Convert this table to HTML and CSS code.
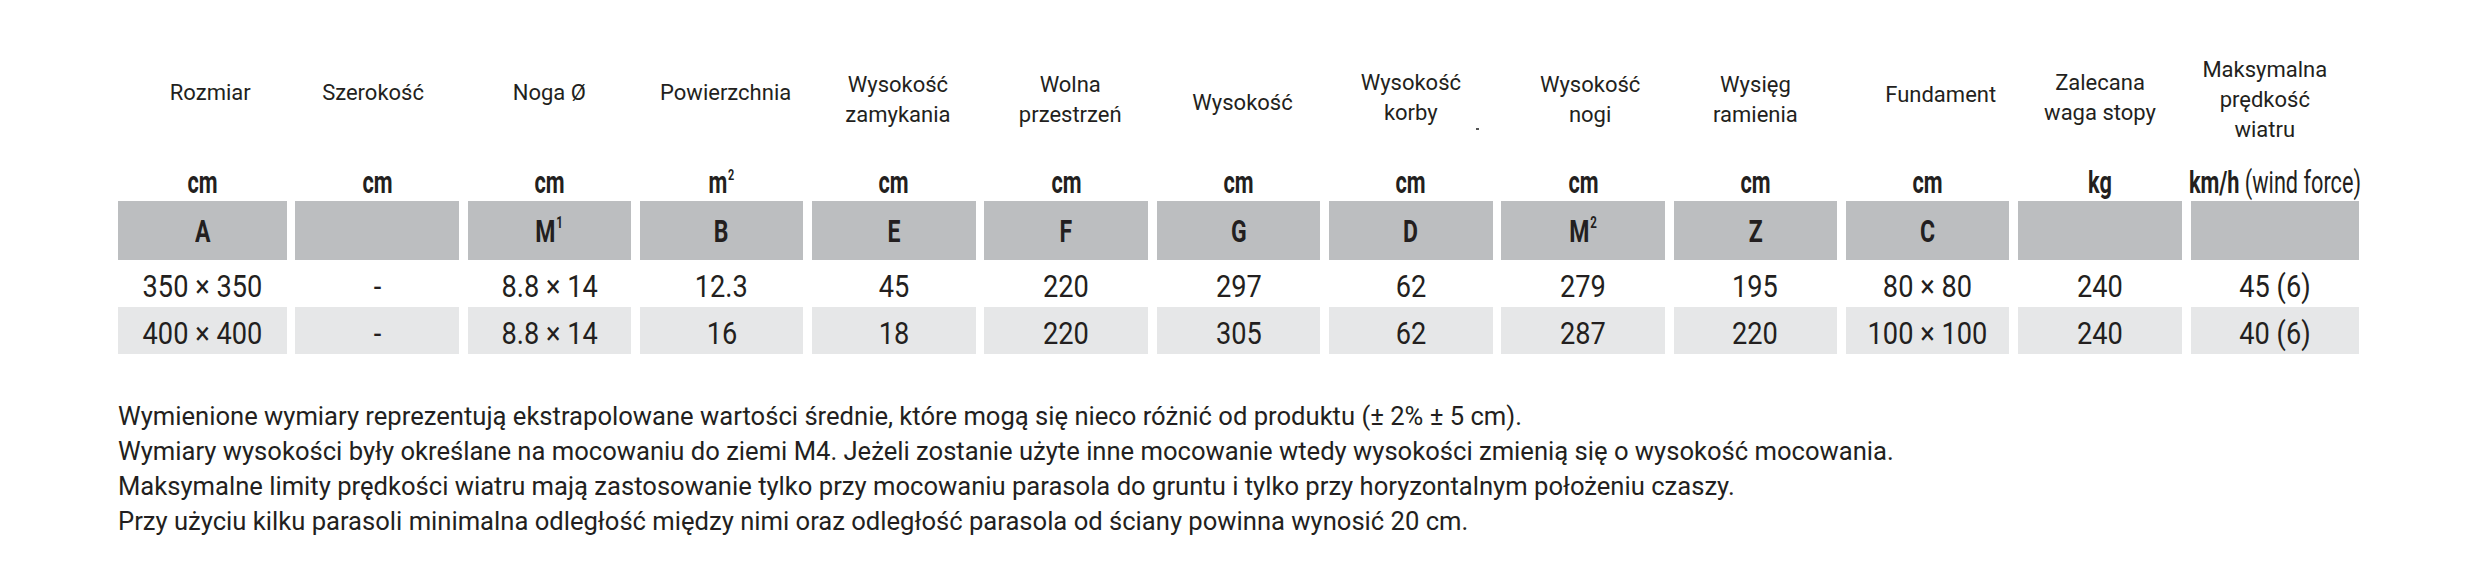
FILE: index.html
```html
<!DOCTYPE html>
<html lang="pl">
<head>
<meta charset="utf-8">
<title>Wymiary parasola</title>
<link rel="stylesheet" href="styles.css">
</head>
<body>
<div class="page">
  <div class="spec">
    <div class="lab hi r8">Rozmiar</div>
    <div class="lab hi l4">Szerokość</div>
    <div class="lab hi">Noga Ø</div>
    <div class="lab hi r4">Powierzchnia</div>
    <div class="lab r4">Wysokość<br>zamykania</div>
    <div class="lab r4">Wolna<br>przestrzeń</div>
    <div class="lab lo r4">Wysokość</div>
    <div class="lab up">Wysokość<br>korby<span class="speck"></span></div>
    <div class="lab r7">Wysokość<br>nogi</div>
    <div class="lab">Wysięg<br>ramienia</div>
    <div class="lab mid r13">Fundament</div>
    <div class="lab up">Zalecana<br>waga stopy</div>
    <div class="lab l10">Maksymalna<br>prędkość<br>wiatru</div>

    <div class="unit"><span class="t">cm</span></div>
    <div class="unit"><span class="t">cm</span></div>
    <div class="unit"><span class="t">cm</span></div>
    <div class="unit"><span class="t">m<sup>2</sup></span></div>
    <div class="unit"><span class="t">cm</span></div>
    <div class="unit"><span class="t">cm</span></div>
    <div class="unit"><span class="t">cm</span></div>
    <div class="unit"><span class="t">cm</span></div>
    <div class="unit"><span class="t">cm</span></div>
    <div class="unit"><span class="t">cm</span></div>
    <div class="unit"><span class="t">cm</span></div>
    <div class="unit"><span class="t">kg</span></div>
    <div class="unit"><span class="t">km/h <span class="thin">(wind force)</span></span></div>

    <div class="key"><span class="t">A</span></div>
    <div class="key"></div>
    <div class="key"><span class="t">M<sup>1</sup></span></div>
    <div class="key"><span class="t">B</span></div>
    <div class="key"><span class="t">E</span></div>
    <div class="key"><span class="t">F</span></div>
    <div class="key"><span class="t">G</span></div>
    <div class="key"><span class="t">D</span></div>
    <div class="key"><span class="t">M<sup>2</sup></span></div>
    <div class="key"><span class="t">Z</span></div>
    <div class="key"><span class="t">C</span></div>
    <div class="key"></div>
    <div class="key"></div>

    <div class="val"><span class="t">350 × 350</span></div>
    <div class="val"><span class="t">-</span></div>
    <div class="val"><span class="t">8.8 × 14</span></div>
    <div class="val"><span class="t">12.3</span></div>
    <div class="val"><span class="t">45</span></div>
    <div class="val"><span class="t">220</span></div>
    <div class="val"><span class="t">297</span></div>
    <div class="val"><span class="t">62</span></div>
    <div class="val"><span class="t">279</span></div>
    <div class="val"><span class="t">195</span></div>
    <div class="val"><span class="t">80 × 80</span></div>
    <div class="val"><span class="t">240</span></div>
    <div class="val"><span class="t">45 (6)</span></div>

    <div class="val alt"><span class="t">400 × 400</span></div>
    <div class="val alt"><span class="t">-</span></div>
    <div class="val alt"><span class="t">8.8 × 14</span></div>
    <div class="val alt"><span class="t">16</span></div>
    <div class="val alt"><span class="t">18</span></div>
    <div class="val alt"><span class="t">220</span></div>
    <div class="val alt"><span class="t">305</span></div>
    <div class="val alt"><span class="t">62</span></div>
    <div class="val alt"><span class="t">287</span></div>
    <div class="val alt"><span class="t">220</span></div>
    <div class="val alt"><span class="t">100 × 100</span></div>
    <div class="val alt"><span class="t">240</span></div>
    <div class="val alt"><span class="t">40 (6)</span></div>
  </div>

  <div class="notes">
    <p>Wymienione wymiary reprezentują ekstrapolowane wartości średnie, które mogą się nieco różnić od produktu (± 2% ± 5 cm).</p>
    <p>Wymiary wysokości były określane na mocowaniu do ziemi M4. Jeżeli zostanie użyte inne mocowanie wtedy wysokości zmienią się o wysokość mocowania.</p>
    <p>Maksymalne limity prędkości wiatru mają zastosowanie tylko przy mocowaniu parasola do gruntu i tylko przy horyzontalnym położeniu czaszy.</p>
    <p>Przy użyciu kilku parasoli minimalna odległość między nimi oraz odległość parasola od ściany powinna wynosić 20 cm.</p>
  </div>
</div>
</body>
</html>
```

FILE: styles.css
```css
html, body {
  margin: 0;
  padding: 0;
  background: #ffffff;
}

.page {
  padding: 40px 0 0 118px;
  color: #231f20;
  font-family: "Roboto", "Liberation Sans", sans-serif;
}

.spec {
  display: grid;
  grid-template-columns: 168.5px repeat(11, 163.5px) 168.5px;
  grid-template-rows: 120px 41px 59px 47px 47px;
  column-gap: 8.8px;
  width: 2241px;
}

/* column captions */
.lab {
  position: relative;
  display: flex;
  align-items: center;
  justify-content: center;
  text-align: center;
  font-size: 22px;
  line-height: 30px;
}

.lab.hi { padding-bottom: 15px; }
.lab.mid { padding-bottom: 10px; }
.lab.up { padding-bottom: 5px; }
.lab.lo { padding-top: 6px; }

.lab.r4 { padding-left: 8px; }
.lab.r7 { padding-left: 14px; }
.lab.r8 { padding-left: 16px; }
.lab.r13 { padding-left: 26px; }
.lab.l4 { padding-right: 8px; }
.lab.l10 { padding-right: 20px; }

.speck {
  position: absolute;
  left: 147px;
  top: 88px;
  width: 3px;
  height: 2px;
  background: #555;
}

/* condensed table text */
.t {
  display: inline-block;
  white-space: nowrap;
  transform-origin: 50% 50%;
}

.unit,
.key,
.val {
  display: flex;
  justify-content: center;
}

.unit {
  align-items: flex-start;
  padding-top: 4px;
  font-weight: 700;
  font-size: 31px;
  line-height: 37px;
}

.unit .t {
  transform: scaleX(0.7);
}

.unit .thin {
  font-weight: 400;
}

.key {
  align-items: flex-start;
  padding-top: 2px;
  background: #bcbec0;
  font-weight: 700;
  font-size: 32px;
  line-height: 57px;
}

.key .t {
  transform: scaleX(0.72);
}

sup {
  font-size: 50%;
  line-height: 0;
  vertical-align: baseline;
  position: relative;
  top: -0.85em;
  margin-left: 1px;
}

.val {
  align-items: flex-start;
  padding-top: 5px;
  font-weight: 400;
  font-size: 32px;
  line-height: 42px;
}

.val .t {
  transform: scaleX(0.85);
}

.val.alt {
  background: #e6e7e8;
}

/* footnotes */
.notes {
  margin-top: 45px;
  font-size: 25.6px;
  line-height: 35px;
}

.notes p {
  margin: 0;
}
```
